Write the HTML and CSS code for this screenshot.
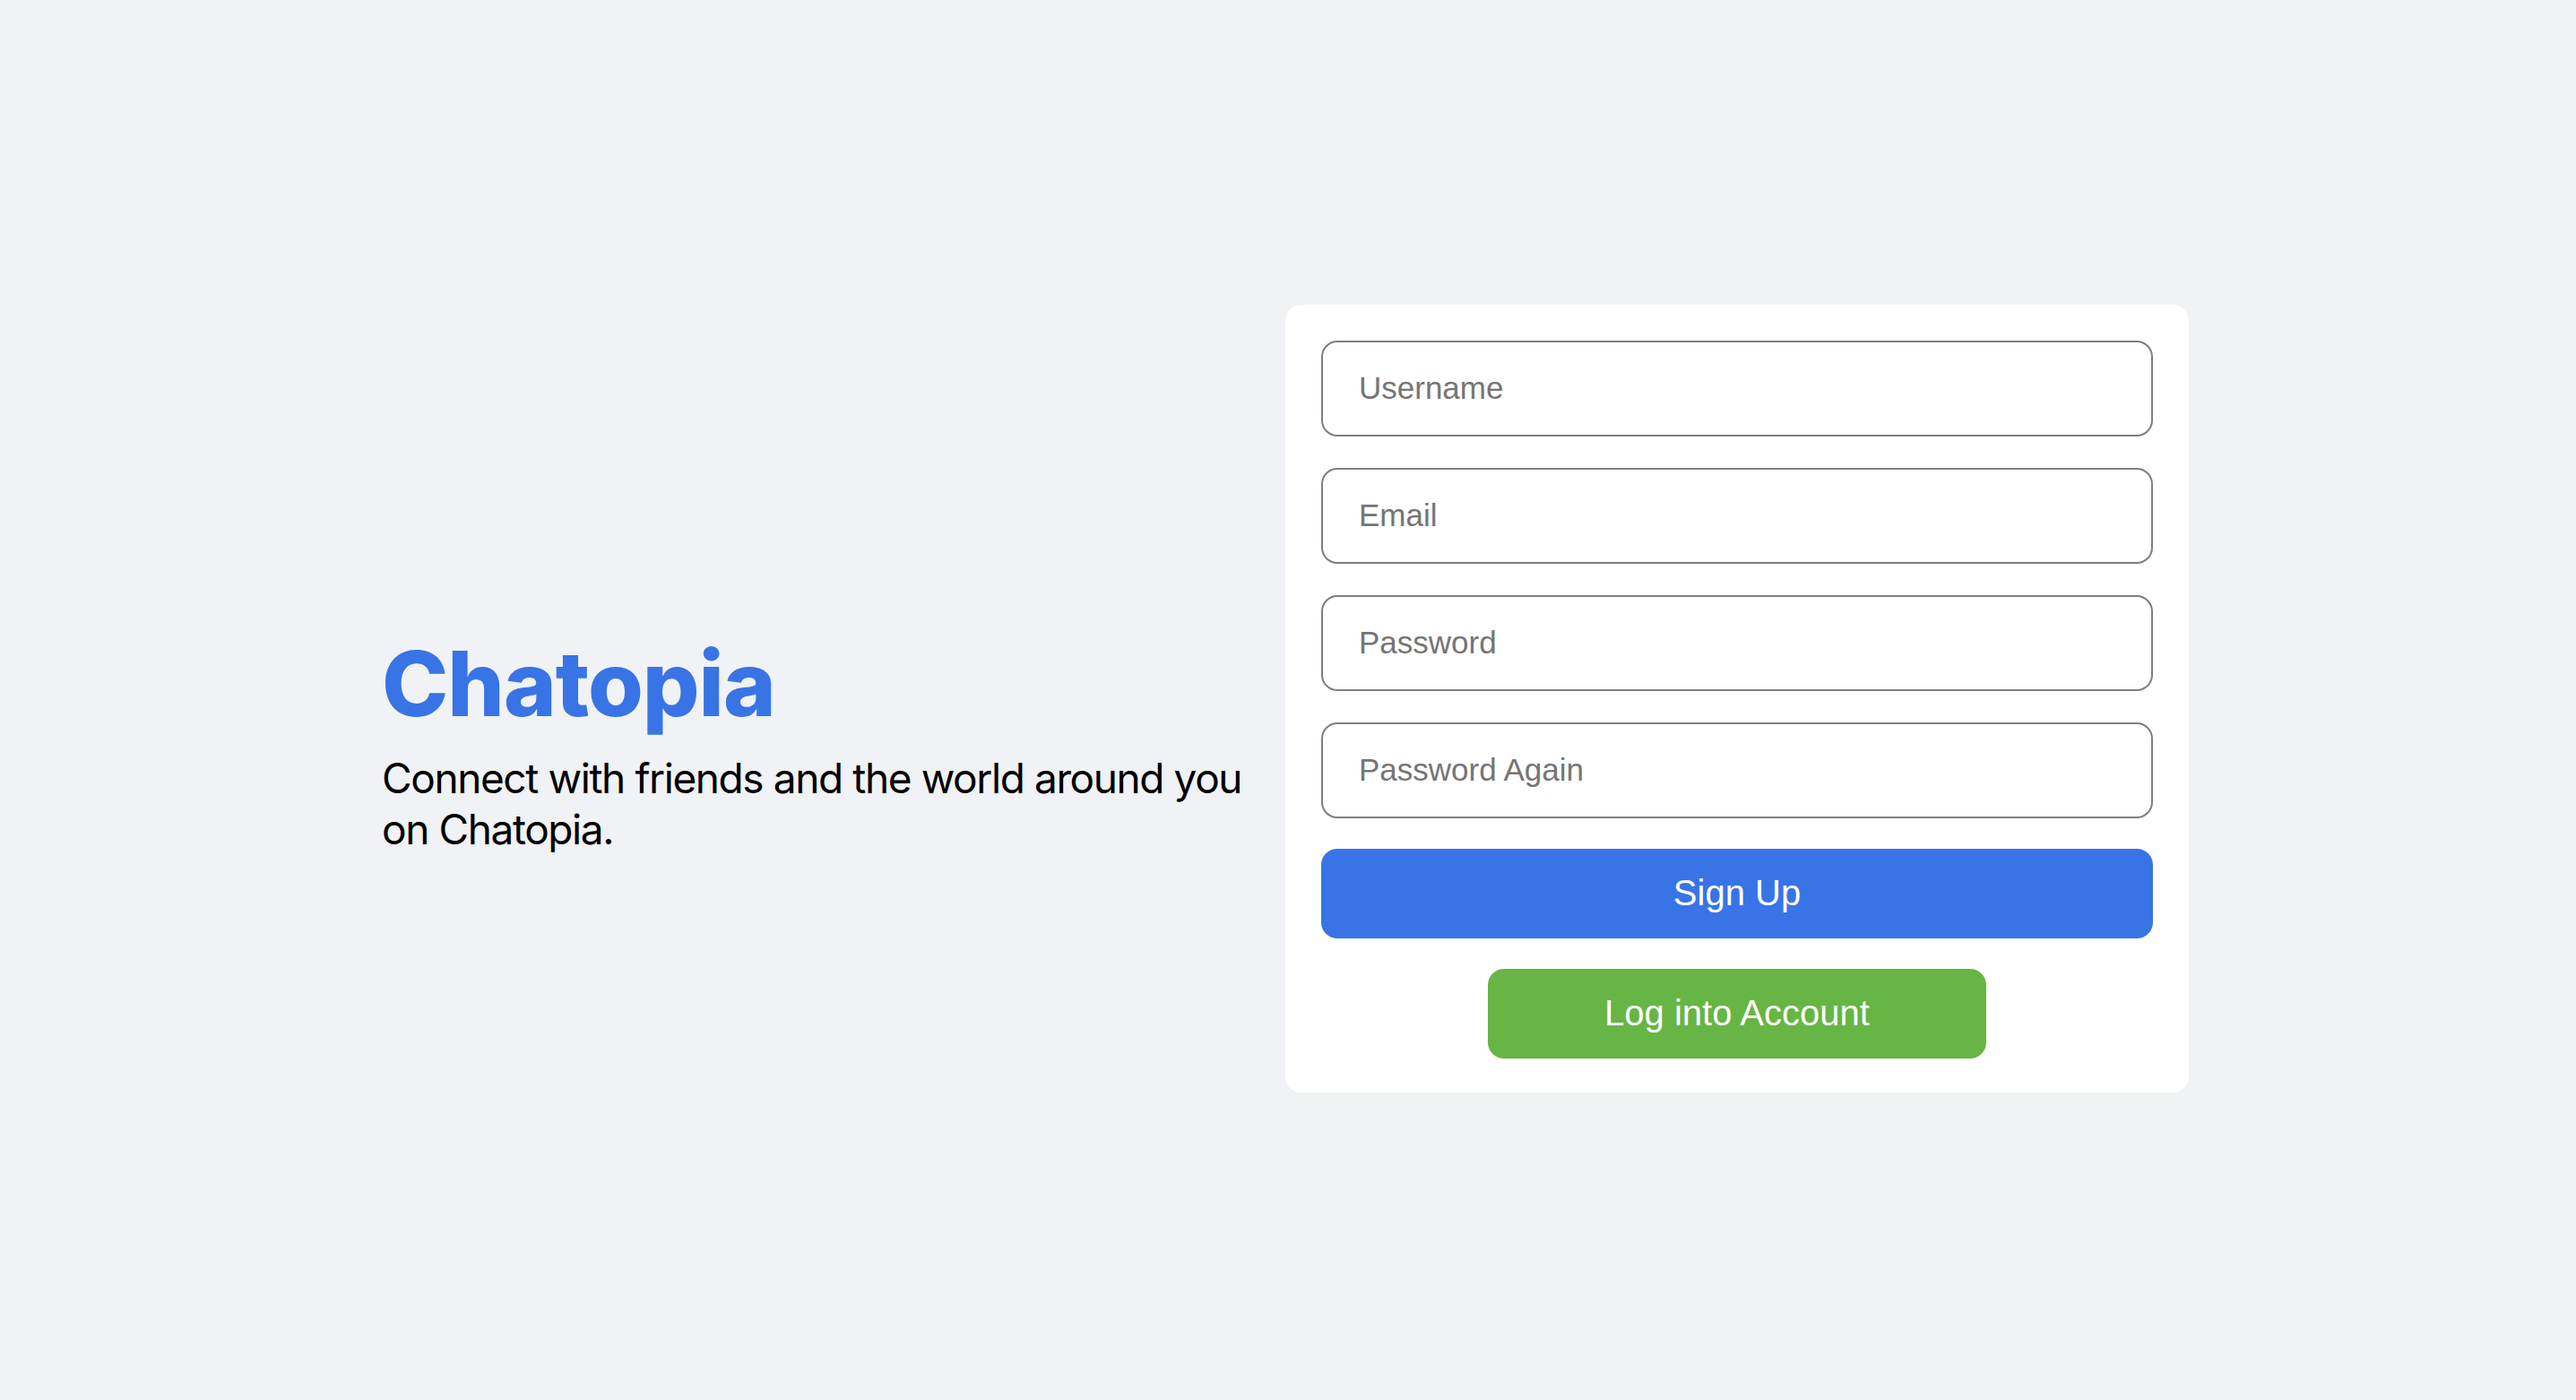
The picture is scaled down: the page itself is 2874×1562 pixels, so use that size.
FILE: index.html
```html
<!DOCTYPE html>
<html lang="en">
<head>
<meta charset="utf-8">
<title>Chatopia — Sign Up</title>
<link rel="stylesheet" href="styles.css">
</head>
<body>
<main class="page">
  <section class="intro">
    <h1 class="brand">Chatopia</h1>
    <p class="tagline">Connect with friends and the world around you on Chatopia.</p>
  </section>
  <form class="card">
    <input class="field" type="text" placeholder="Username">
    <input class="field" type="email" placeholder="Email">
    <input class="field" type="password" placeholder="Password">
    <input class="field" type="password" placeholder="Password Again">
    <button class="btn btn-primary" type="button">Sign Up</button>
    <button class="btn btn-secondary" type="button">Log into Account</button>
  </form>
</main>
</body>
</html>
```
FILE: styles.css
```css
* { box-sizing: border-box; }
html, body { margin: 0; padding: 0; }
body {
  background: #f0f2f5;
  font-family: Inter, "Liberation Sans", sans-serif;
}
.page {
  min-height: 100vh;
  display: flex;
  align-items: center;
  justify-content: center;
  gap: 44px;
  padding-right: 8px;
  padding-bottom: 4px;
}
.intro {
  width: 966px;
  margin-top: 98px;
  padding-left: 2px;
}
.brand {
  margin: 0 0 17px;
  font-family: Inter, sans-serif;
  font-weight: 800;
  font-size: 100px;
  line-height: 120px;
  color: #3874e6;
  letter-spacing: -1px;
}
.tagline {
  margin: 0;
  font-family: Inter, sans-serif;
  font-size: 46px;
  line-height: 56.5px;
  letter-spacing: -1.4px;
  color: #000;
}
.card {
  width: 1008px;
  background: #fff;
  border-radius: 18px;
  padding: 40px 40px 38px;
  display: flex;
  flex-direction: column;
  align-items: center;
}
.field {
  width: 100%;
  height: 107px;
  margin: 0 0 35px;
  padding: 0 40px;
  border: 2px solid #7f7f7f;
  border-radius: 18px;
  background: #fff;
  font-family: "Liberation Sans", Arial, sans-serif;
  font-size: 35px;
  color: #333;
  outline: none;
}
.field::placeholder { color: #757575; }
.field:last-of-type { margin-bottom: 34px; }
.btn {
  height: 100px;
  border: none;
  border-radius: 18px;
  color: #fff;
  font-family: "Liberation Sans", Arial, sans-serif;
  font-size: 40px;
  cursor: pointer;
}
.btn-primary {
  width: 100%;
  background: #3874e6;
  margin-bottom: 34px;
}
.btn-secondary {
  width: 556px;
  background: #67b544;
}
```
